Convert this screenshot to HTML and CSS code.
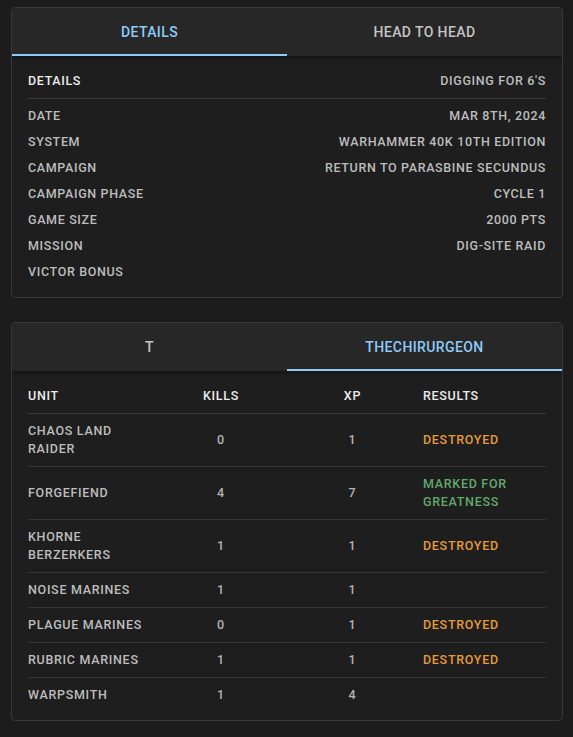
FILE: index.html
```html
<!DOCTYPE html>
<html>
<head>
<meta charset="utf-8">
<link rel="stylesheet" href="styles.css">
</head>
<body>
<div class="page">
  <section class="card">
    <div class="tabs">
      <div class="tab active">DETAILS</div>
      <div class="tab">HEAD TO HEAD</div>
    </div>
    <div class="content">
      <div class="row head">
        <span class="label">DETAILS</span>
        <span class="value">DIGGING FOR 6'S</span>
      </div>
      <div class="list">
        <div class="row"><span class="label">DATE</span><span class="value">MAR 8TH, 2024</span></div>
        <div class="row"><span class="label">SYSTEM</span><span class="value">WARHAMMER 40K 10TH EDITION</span></div>
        <div class="row"><span class="label">CAMPAIGN</span><span class="value">RETURN TO PARASBINE SECUNDUS</span></div>
        <div class="row"><span class="label">CAMPAIGN PHASE</span><span class="value">CYCLE 1</span></div>
        <div class="row"><span class="label">GAME SIZE</span><span class="value">2000 PTS</span></div>
        <div class="row"><span class="label">MISSION</span><span class="value">DIG-SITE RAID</span></div>
        <div class="row"><span class="label">VICTOR BONUS</span><span class="value"></span></div>
      </div>
    </div>
  </section>

  <section class="card">
    <div class="tabs">
      <div class="tab">T</div>
      <div class="tab active">THECHIRURGEON</div>
    </div>
    <div class="content table-content">
      <div class="trow thead">
        <span class="c-unit">UNIT</span>
        <span class="c-num">KILLS</span>
        <span class="c-num">XP</span>
        <span class="c-res">RESULTS</span>
      </div>
      <div class="trow">
        <span class="c-unit">CHAOS LAND RAIDER</span>
        <span class="c-num">0</span>
        <span class="c-num">1</span>
        <span class="c-res destroyed">DESTROYED</span>
      </div>
      <div class="trow">
        <span class="c-unit">FORGEFIEND</span>
        <span class="c-num">4</span>
        <span class="c-num">7</span>
        <span class="c-res marked">MARKED FOR GREATNESS</span>
      </div>
      <div class="trow">
        <span class="c-unit">KHORNE BERZERKERS</span>
        <span class="c-num">1</span>
        <span class="c-num">1</span>
        <span class="c-res destroyed">DESTROYED</span>
      </div>
      <div class="trow">
        <span class="c-unit">NOISE MARINES</span>
        <span class="c-num">1</span>
        <span class="c-num">1</span>
        <span class="c-res"></span>
      </div>
      <div class="trow">
        <span class="c-unit">PLAGUE MARINES</span>
        <span class="c-num">0</span>
        <span class="c-num">1</span>
        <span class="c-res destroyed">DESTROYED</span>
      </div>
      <div class="trow">
        <span class="c-unit">RUBRIC MARINES</span>
        <span class="c-num">1</span>
        <span class="c-num">1</span>
        <span class="c-res destroyed">DESTROYED</span>
      </div>
      <div class="trow last">
        <span class="c-unit">WARPSMITH</span>
        <span class="c-num">1</span>
        <span class="c-num">4</span>
        <span class="c-res"></span>
      </div>
    </div>
  </section>
</div>
</body>
</html>
```

FILE: styles.css
```css
* { box-sizing: border-box; }

html, body {
  margin: 0;
  padding: 0;
  background: #1c1c1c;
}

body {
  font-family: Roboto, "Liberation Sans", sans-serif;
  color: #bdbdbd;
}

.page {
  padding: 7px 10px 0 11px;
  display: flex;
  flex-direction: column;
  gap: 24px;
}

.card {
  background: #1e1e1e;
  border: 1px solid #383838;
  border-radius: 4px;
  overflow: hidden;
}

.tabs {
  display: flex;
  background: #272727;
  height: 48px;
  box-shadow: 0 2px 4px rgba(0, 0, 0, 0.35);
  position: relative;
}

.tab {
  flex: 1;
  display: flex;
  align-items: center;
  justify-content: center;
  font-size: 14px;
  font-weight: 500;
  letter-spacing: 0.4px;
  color: #c4c4c4;
  border-bottom: 2px solid transparent;
  padding-top: 1px;
}

.tab.active {
  color: #90caf9;
  border-bottom-color: #90caf9;
}

.content {
  padding: 7px 16px 13px;
}

.row {
  display: flex;
  justify-content: space-between;
  align-items: center;
  height: 26px;
  font-size: 12.5px;
  font-weight: 500;
  letter-spacing: 0.65px;
}

.row.head {
  height: 36px;
  border-bottom: 1px solid #3a3a3a;
  color: #ececec;
}

.row.head .value {
  color: #bdbdbd;
}

.list {
  padding-top: 3px;
}

.table-content {
  padding: 7px 16px 8px;
}

.trow {
  display: grid;
  grid-template-columns: 128px 130px 133px 1fr;
  align-items: center;
  font-size: 12.5px;
  font-weight: 500;
  letter-spacing: 0.7px;
  line-height: 18px;
  padding: 8px 0;
  border-bottom: 1px solid #353535;
}

.trow.thead {
  height: 36px;
  padding: 0;
  color: #ececec;
  border-bottom-color: #3a3a3a;
}

.trow.last {
  border-bottom: none;
}

.c-unit {
  padding-right: 6px;
}

.c-num {
  text-align: center;
}

.c-res {
  padding-left: 4px;
}

.trow:not(.thead) .c-num {
  color: #b4b4b4;
}

.destroyed {
  color: #e59a3c;
}

.marked {
  color: #63a96c;
}
```
